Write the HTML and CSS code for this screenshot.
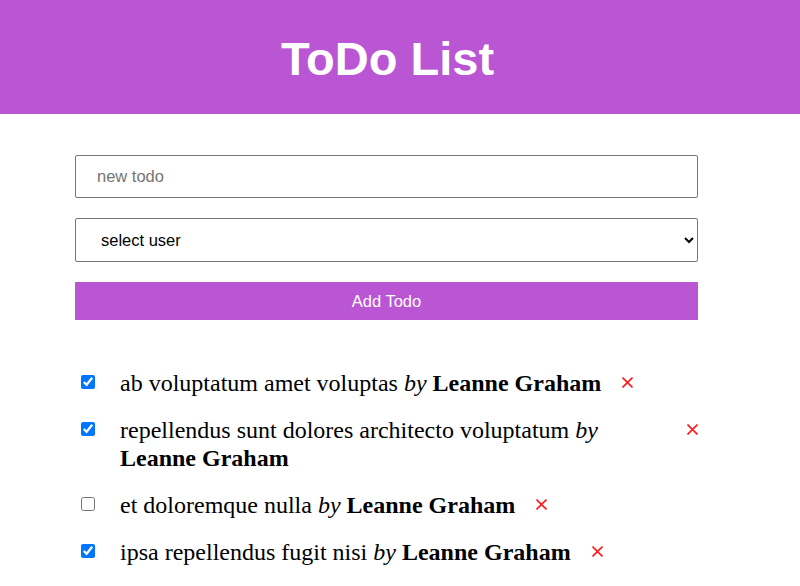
FILE: index.html
```html
<!DOCTYPE html>
<html lang="en">
<head>
<meta charset="utf-8">
<title>ToDo List</title>
<link rel="stylesheet" href="styles.css">
</head>
<body>
<header class="header">
  <h1 class="title">ToDo List</h1>
</header>
<main class="container">
  <form class="form">
    <input class="field text-field" type="text" placeholder="new todo">
    <select class="field select-field">
      <option>select user</option>
    </select>
    <button class="add-btn" type="button">Add Todo</button>
  </form>
  <ul class="todos">
    <li class="todo">
      <input class="check" type="checkbox" checked>
      <span class="todo-text">ab voluptatum amet voluptas <i>by</i> <b>Leanne Graham</b></span>
      <button class="remove" type="button" aria-label="remove"><svg viewBox="0 0 11 11" width="11" height="11"><path d="M0.5 0.5L10.5 10.5M10.5 0.5L0.5 10.5" stroke="#ff1a1a" stroke-width="1.6" fill="none"/></svg></button>
    </li>
    <li class="todo">
      <input class="check" type="checkbox" checked>
      <span class="todo-text">repellendus sunt dolores architecto voluptatum <i>by</i> <b>Leanne Graham</b></span>
      <button class="remove" type="button" aria-label="remove"><svg viewBox="0 0 11 11" width="11" height="11"><path d="M0.5 0.5L10.5 10.5M10.5 0.5L0.5 10.5" stroke="#ff1a1a" stroke-width="1.6" fill="none"/></svg></button>
    </li>
    <li class="todo">
      <input class="check" type="checkbox">
      <span class="todo-text">et doloremque nulla <i>by</i> <b>Leanne Graham</b></span>
      <button class="remove" type="button" aria-label="remove"><svg viewBox="0 0 11 11" width="11" height="11"><path d="M0.5 0.5L10.5 10.5M10.5 0.5L0.5 10.5" stroke="#ff1a1a" stroke-width="1.6" fill="none"/></svg></button>
    </li>
    <li class="todo">
      <input class="check" type="checkbox" checked>
      <span class="todo-text">ipsa repellendus fugit nisi <i>by</i> <b>Leanne Graham</b></span>
      <button class="remove" type="button" aria-label="remove"><svg viewBox="0 0 11 11" width="11" height="11"><path d="M0.5 0.5L10.5 10.5M10.5 0.5L0.5 10.5" stroke="#ff1a1a" stroke-width="1.6" fill="none"/></svg></button>
    </li>
  </ul>
</main>
</body>
</html>
```
FILE: styles.css
```css
html, body {
  margin: 0;
  padding: 0;
  background: #fff;
}
body {
  font-family: "Liberation Serif", "Times New Roman", serif;
  color: #000;
}
.header {
  background: #ba55d3;
  height: 114px;
  display: flex;
  align-items: center;
  justify-content: center;
  padding-right: 25px;
}
.title {
  margin: 0;
  color: #fff;
  font-family: "Liberation Sans", Arial, sans-serif;
  font-weight: bold;
  font-size: 47px;
  line-height: 1;
  padding-top: 2px;
}
.container {
  width: 623px;
  margin: 41px 0 0 75px;
}
.form {
  display: flex;
  flex-direction: column;
  gap: 20px;
}
.field {
  box-sizing: border-box;
  width: 100%;
  border: 1px solid #767676;
  border-radius: 2px;
  font-family: "Liberation Sans", Arial, sans-serif;
  font-size: 16.5px;
  background: #fff;
  color: #000;
  margin: 0;
}
.text-field {
  height: 43px;
  padding: 0 21px;
}
.text-field::placeholder {
  color: #757575;
}
.select-field {
  height: 44px;
  padding: 0 13px 0 21px;
}
.add-btn {
  height: 38px;
  border: none;
  background: #ba55d3;
  color: #fff;
  font-family: "Liberation Sans", Arial, sans-serif;
  font-size: 16.5px;
  margin: 0;
}
.todos {
  list-style: none;
  margin: 49px 0 0;
  padding: 0;
}
.todo {
  display: flex;
  align-items: flex-start;
  font-size: 24px;
  line-height: 28px;
  margin-bottom: 19px;
}
.check {
  width: 14px;
  height: 14px;
  margin: 6px 0 0 6px;
  flex: none;
  accent-color: #0075ff;
}
.todo-text {
  margin-left: 25px;
}
.remove {
  flex: none;
  display: flex;
  align-items: center;
  height: 28px;
  border: none;
  background: none;
  padding: 0;
  margin-left: 21px;
  margin-top: -1px;
}
.remove svg {
  display: block;
}
```
